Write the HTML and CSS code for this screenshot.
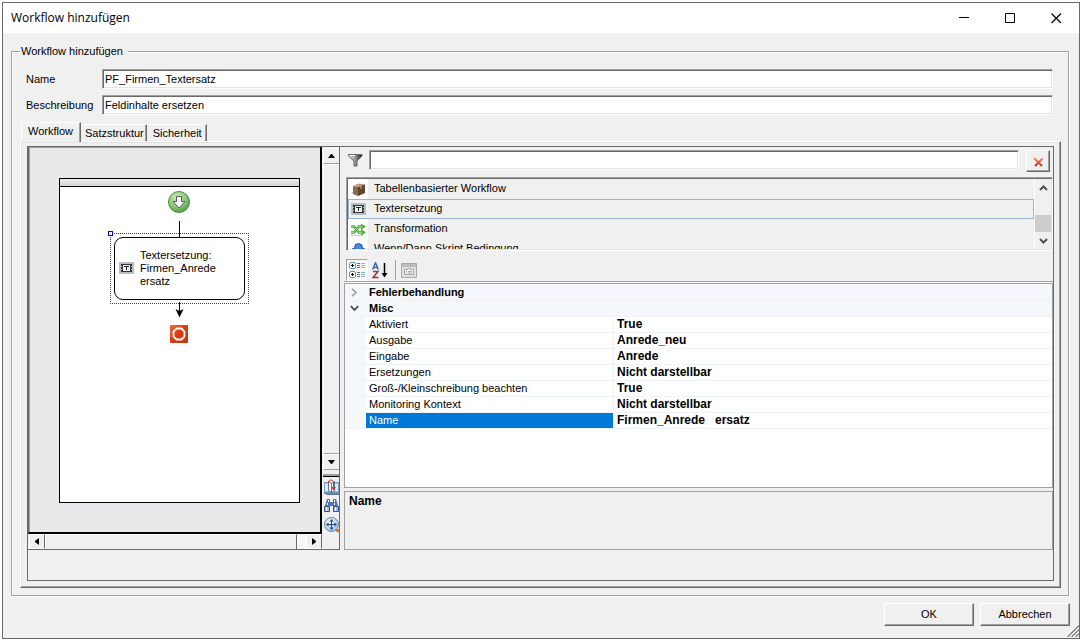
FILE: index.html
```html
<!DOCTYPE html>
<html lang="de">
<head>
<meta charset="utf-8">
<title>Workflow hinzufügen</title>
<link rel="stylesheet" href="styles.css">
</head>
<body>
<svg class="defs" aria-hidden="true">
  <defs>
    <radialGradient id="green" cx=".4" cy=".3" r=".75"><stop offset="0" stop-color="#c9edb5"/><stop offset=".55" stop-color="#8fcb79"/><stop offset="1" stop-color="#4a9440"/></radialGradient>
    <linearGradient id="red" x1="0" y1="0" x2="1" y2="1"><stop offset="0" stop-color="#ee6a45"/><stop offset=".5" stop-color="#dc3a0c"/><stop offset="1" stop-color="#b93a1c"/></linearGradient>
    <linearGradient id="steel" x1="0" y1="0" x2="1" y2="0"><stop offset="0" stop-color="#e8e8e8"/><stop offset=".45" stop-color="#a0a0a0"/><stop offset="1" stop-color="#222"/></linearGradient>
    <linearGradient id="cross" x1="0" y1="0" x2="0" y2="1"><stop offset="0" stop-color="#ff8a6a"/><stop offset="1" stop-color="#e02000"/></linearGradient>
    <radialGradient id="blue" cx=".4" cy=".3" r=".8"><stop offset="0" stop-color="#f4faff"/><stop offset="1" stop-color="#8fb8ea"/></radialGradient>
    <symbol id="textbox" viewBox="0 0 15 12">
      <rect width="15" height="12" fill="#b9bfc6"/><rect x="2" y="2" width="11" height="8" fill="#2e343b"/>
      <rect x="4" y="3" width="7" height="6" fill="#f3f3f3"/><path d="M5 4h5v1H8v3H7V5H5z" fill="#222"/>
      <path d="M2 4h1v1H2zM2 7h1v1H2zM12 4h1v1h-1zM12 7h1v1h-1z" fill="#b9bfc6"/>
    </symbol>
  </defs>
</svg>
<div class="window">
  <header class="titlebar">
    <h1 class="title">Workflow hinzufügen</h1>
    <button class="caption" aria-label="Minimieren"><svg width="11" height="11"><path d="M0 4.500h10" stroke="#000"/></svg></button>
    <button class="caption" aria-label="Maximieren"><svg width="11" height="11"><path d="M.5.500h9v9h-9z" fill="none" stroke="#000"/></svg></button>
    <button class="caption" aria-label="Schließen"><svg width="11" height="11"><path d="M.5.500l9.500 9.500M10 .500L.5 10" stroke="#000" stroke-width="1.200"/></svg></button>
  </header>

  <main class="client">
    <fieldset class="group">
      <legend class="legend">Workflow hinzufügen</legend>
      <div class="fields">
        <label for="name">Name</label><input class="text" id="name" type="text" value="PF_Firmen_Textersatz">
        <label for="desc">Beschreibung</label><input class="text" id="desc" type="text" value="Feldinhalte ersetzen">
      </div>

      <div class="tabs" role="tablist">
        <button class="tab active" role="tab" aria-selected="true">Workflow</button>
        <button class="tab" role="tab" aria-selected="false">Satzstruktur</button>
        <button class="tab" role="tab" aria-selected="false">Sicherheit</button>
      </div>

      <section class="page" role="tabpanel">
        <div class="split">
          <div class="designer">
            <div class="view">
              <div class="sheet">
                <div class="sheet-head"></div>
                <svg class="start" width="23" height="22"><circle cx="11" cy="11" r="10.500" fill="url(#green)" stroke="#4c8f45"/><path d="M8.500 5.500h5v5h3.500L11 17 5 10.500h3.500z" fill="#fff" stroke="#5c5470"/></svg>
                <svg width="9" height="17"><path d="M4.500 1v16" stroke="#000"/></svg>
                <div class="node">
                  <span class="handle"></span>
                  <svg width="15" height="12"><use href="#textbox"/></svg>
                  <span>Textersetzung:<br>Firmen_Anrede<br>ersatz</span>
                </div>
                <svg width="9" height="18"><path d="M4.500 2v11" stroke="#000"/><path d="M.5 9l4 2 4-2-4 8.500z"/></svg>
                <svg class="stop" width="19" height="18"><rect width="18" height="18" rx="1" fill="url(#red)"/><path d="M6.500 3.500h5l3 3v5l-3 3h-5l-3-3v-5z" fill="none" stroke="#fff" stroke-width="1.800"/></svg>
              </div>
            </div>
            <div class="side">
              <div class="vscroll">
                <button class="arrow" aria-label="Nach oben"><svg width="7" height="4"><path d="M3 0h1l3 4H0z"/></svg></button>
                <div class="thumb"></div>
                <button class="arrow" aria-label="Nach unten"><svg width="7" height="4"><path d="M0 0h7L4 4H3z"/></svg></button>
              </div>
              <div class="tools">
                <button class="tool" aria-label="Seiten"><svg width="15" height="16"><path d="M0 3h5v11H0zM10 3h5v11h-5z" fill="#7d9fbd"/><path d="M3 14h12v2H2z" fill="#57789a"/><path d="M0 13h15v2H0z" fill="#6d8dac"/><path d="M1 4.500h3v8H1zM11 4.500h3v8h-3z" fill="#dce8f2"/><path d="M4.500 2.500l3 2v9l-3-2zM10.500 2.500l-3 2v9l3-2z" fill="#fff" stroke="#58748e"/><path d="M4.500 4c0-4 5-4 5 0v5" fill="none" stroke="#d33"/><path d="M7 8h5l-2.500 3.500z" fill="#d33"/></svg></button>
                <button class="tool" aria-label="Suchen"><svg width="15" height="15"><path d="M3 1h3v3h3V1h3l2 7v5H9V8H6v5H1V8z" fill="#5272b3"/><path d="M.5 8.500h5v5h-5zM9.500 8.500h5v5h-5z" fill="#9fbbe3" stroke="#34518f"/><path d="M2 9h1v4H2zM11 9h1v4h-1zM4 2h1v2H4zM10 2h1v2h-1zM3 5h1v2H3zM10 5h1v2h-1z" fill="#fff"/></svg></button>
                <button class="tool" aria-label="Zoom"><svg width="15" height="16"><circle cx="7.500" cy="7.500" r="7" fill="url(#blue)" stroke="#76848f"/><path d="M7.500 3v9M3 7.500h9" stroke="#234a8c"/><path d="M7.500 2l2 2.500h-4zM7.500 13l2-2.500h-4zM2 7.500l2.500-2v4zM13 7.500l-2.500-2v4z" fill="#234a8c"/><circle cx="13.500" cy="13.500" r="1.800" fill="#e07a28"/></svg></button>
              </div>
            </div>
            <div class="hscroll">
              <button class="arrow" aria-label="Nach links"><svg width="4" height="7"><path d="M4 0v7L0 4V3z"/></svg></button>
              <div class="thumb"></div>
              <div class="dither"></div>
              <button class="arrow" aria-label="Nach rechts"><svg width="4" height="7"><path d="M0 0v7l4-3V3z"/></svg></button>
            </div>
          </div>

          <div class="side-panel">
            <div class="filter">
              <svg width="15" height="13" aria-hidden="true"><path d="M.5.500h13.500v1.500L9 7v5H6V7L.5 2z" fill="url(#steel)" stroke="#666"/><path d="M2 1h5v1H2z" fill="#fff"/></svg>
              <input class="text" type="text" aria-label="Filter">
              <button class="clear" aria-label="Filter löschen"><svg width="11" height="10"><path d="M1 1l8 8M9.500 1.500L2 9" stroke="url(#cross)" stroke-width="2"/></svg></button>
            </div>

            <div class="list">
              <ul class="items">
                <li class="item"><span class="icon"><svg width="15" height="14"><path d="M0 11l5-2v4z" fill="#bbb"/><path d="M2 4l5 1v9l-5-2z" fill="#8d6b48"/><path d="M2 4l6-2.500 6 1-7 2.500z" fill="#b4936a"/><path d="M7 5l7-2.500v8.500l-7 3z" fill="#5f452e"/><path d="M5 3l5 1v3" fill="none" stroke="#c7ab84"/></svg></span>Tabellenbasierter Workflow</li>
                <li class="item selected"><span class="icon"><svg width="15" height="12"><use href="#textbox"/></svg></span>Textersetzung</li>
                <li class="item"><span class="icon"><svg width="15" height="13"><path d="M0 12.500h12" stroke="#ccc"/><path d="M0 3.500h3l5 6h3M0 9.500h3l5-6h3" fill="none" stroke="#4c9c3d" stroke-width="2.600"/><path d="M10 .5l5 3-5 3.500zM10 6l5 3.500-5 3z" fill="#54b23c"/><path d="M0 3.500h3l5 6h3M0 9.500h3l5-6h3" fill="none" stroke="#9be07e"/></svg></span>Transformation</li>
                <li class="item"><span class="icon"><svg width="15" height="15"><path d="M1.500 6.500h12v8h-12z" fill="#dbe8fa" stroke="#3766b4"/><circle cx="7.500" cy="5.500" r="4" fill="#4a86e0" stroke="#2757a8"/></svg></span>Wenn/Dann Skript Bedingung</li>
              </ul>
              <div class="thin-scroll">
                <button class="chev" aria-label="Liste nach oben"><svg width="9" height="6"><path d="M1 5l3.500-3.500L8 5" fill="none" stroke="#505050" stroke-width="2"/></svg></button>
                <div class="thin-thumb"></div>
                <button class="chev" aria-label="Liste nach unten"><svg width="9" height="6"><path d="M1 1l3.500 3.500L8 1" fill="none" stroke="#505050" stroke-width="2"/></svg></button>
              </div>
            </div>

            <div class="toolbar" role="toolbar">
              <button class="tbtn pressed" aria-label="Kategorisiert"><svg width="17" height="17"><rect x=".5" y=".5" width="6" height="6" rx="1.500" fill="#fff" stroke="#5b93c7"/><rect x=".5" y="9.500" width="6" height="6" rx="1.500" fill="#fff" stroke="#5b93c7"/><path d="M2 3.500h3M3.500 2v3M2 12.500h3M3.500 11v3" stroke="#000"/><path d="M8 1.500h3M8 3.500h3M8 5.500h3M8 10.500h3M8 12.500h3M8 14.500h3" stroke="#6c6c6c"/><path d="M12 1.500h4M12 3.500h4M12 5.500h4M12 10.500h4M12 12.500h4M12 14.500h4" stroke="#85b4df"/></svg></button>
              <button class="tbtn" aria-label="Alphabetisch"><svg width="16" height="17"><path d="M.7 7.500L3.500.8l2.800 6.700M1.500 5.500h4" fill="none" stroke="#2e69b8" stroke-width="1.500"/><path d="M1 9.500h5L1 15.500h5.500" fill="none" stroke="#9c3535" stroke-width="1.500"/><path d="M12.500 1v13" stroke="#000" stroke-width="1.500"/><path d="M9.500 11l3 4.500 3-4.500z"/></svg></button>
              <span class="sep"></span>
              <button class="tbtn" aria-label="Eigenschaftenseiten" disabled><svg width="16" height="15"><path d="M.5.500h15v14H.5z" fill="#e0e0e0" stroke="#a8a8a8"/><path d="M1 1h14v3H1z" fill="#bcbcbc"/><path d="M3.500 6.500h3v-1h3v1h3v5h-9z" fill="#f0f0f0" stroke="#a8a8a8"/><path d="M5 8.500h1M7 8.500h4M5 10h1M7 10h4" stroke="#aaa"/></svg></button>
            </div>

            <div class="grid-box">
              <table class="props">
                <colgroup><col class="c-gutter"><col class="c-name"><col></colgroup>
                <tbody>
                  <tr class="cat"><td><svg width="9" height="9"><path d="M2 .8l4 3.700-4 3.700" fill="none" stroke="#a0a0a0" stroke-width="1.700"/></svg></td><th colspan="2">Fehlerbehandlung</th></tr>
                  <tr class="cat"><td><svg width="9" height="7"><path d="M.8 1l3.700 4 3.700-4" fill="none" stroke="#444" stroke-width="1.800"/></svg></td><th colspan="2">Misc</th></tr>
                  <tr><td></td><th>Aktiviert</th><td>True</td></tr>
                  <tr><td></td><th>Ausgabe</th><td>Anrede_neu</td></tr>
                  <tr><td></td><th>Eingabe</th><td>Anrede</td></tr>
                  <tr><td></td><th>Ersetzungen</th><td>Nicht darstellbar</td></tr>
                  <tr><td></td><th>Groß-/Kleinschreibung beachten</th><td>True</td></tr>
                  <tr><td></td><th>Monitoring Kontext</th><td>Nicht darstellbar</td></tr>
                  <tr class="current"><td></td><th>Name</th><td>Firmen_Anrede &nbsp; ersatz</td></tr>
                </tbody>
              </table>
            </div>
            <div class="help">Name</div>
          </div>
        </div>
      </section>
    </fieldset>

    <footer class="actions">
      <button class="btn">OK</button>
      <button class="btn">Abbrechen</button>
      <svg class="grip" width="13" height="13" aria-hidden="true"><path d="M0 13L13 0M4 13l9-9M8 13l5-5" stroke="#fff" stroke-width="1.500"/><path d="M1.500 13L13 1.500M5.500 13L13 5.500M9.500 13L13 9.500" stroke="#808080" stroke-width="1.500"/></svg>
    </footer>
  </main>
</div>
</body>
</html>
```
FILE: styles.css
```css
* { box-sizing: border-box; }

body {
  margin: 0;
  height: 100vh;
  padding: 2px 3px 4px 2px;
  background: #fff;
  color: #000;
  font: 11px/13px "Liberation Sans", Arial, sans-serif;
}

button {
  padding: 0;
  border: 0;
  background: #f0f0f0;
  color: #000;
  font: inherit;
}

svg { display: block; flex: none; }
.defs { position: absolute; width: 0; height: 0; }

.window {
  display: flex;
  flex-direction: column;
  height: 100%;
  border: 1px solid #696969;
  background: #f0f0f0;
}

/* Title bar */
.titlebar {
  display: flex;
  align-items: center;
  height: 30px;
  background: #fff;
}
.title {
  flex: 1;
  margin: 0;
  padding-left: 8px;
  font: 12px/16px "Open Sans", "Noto Sans", sans-serif;
}
.caption {
  display: grid;
  place-items: center;
  width: 46px;
  height: 28px;
  background: none;
}

.client {
  flex: 1;
  display: flex;
  flex-direction: column;
  min-height: 0;
  padding: 11px 10px 0 8px;
}

/* Group box */
.group {
  flex: 1;
  display: flex;
  flex-direction: column;
  min-width: 0;
  min-height: 0;
  margin: 0;
  padding: 11px 7px 7px 8px;
  border: 1px solid #a0a0a0;
  box-shadow: 1px 1px 0 #fff, inset 1px 1px 0 #fff;
}
.legend {
  height: 14px;
  padding: 0 5px 0 1px;
  background: #f0f0f0;
  line-height: 15px;
}

.fields {
  display: grid;
  grid-template-columns: 76px 1fr;
  row-gap: 6px;
  align-items: center;
  padding: 0 8px 0 6px;
}
.text {
  width: 100%;
  min-width: 0;
  height: 20px;
  padding: 0 2px;
  border: 1px solid;
  border-color: #a0a0a0 #fff #fff #a0a0a0;
  box-shadow: inset 1px 1px 0 #696969, inset -1px -1px 0 #e3e3e3;
  background: #fff;
  color: #000;
  font: inherit;
  outline: 0;
}

/* Tabs */
.tabs {
  display: flex;
  align-items: flex-end;
  height: 26px;
  padding-left: 1px;
}
.tab {
  height: 17px;
  padding: 0 2px 0 4px;
  border-top: 1px solid #fff;
  border-right: 1px solid #696969;
  box-shadow: inset -1px 0 0 #a0a0a0;
}
.tab + .tab + .tab { padding: 0 4px 0 6px; }
.tab.active {
  position: relative;
  z-index: 1;
  height: 20px;
  margin-bottom: -1px;
  padding: 0 7px 2px 6px;
  border-left: 1px solid #fff;
}

.page {
  flex: 1;
  display: flex;
  min-height: 0;
  padding: 4px 6px 6px;
  border: 1px solid;
  border-color: #fff #696969 #696969 #fff;
  box-shadow: inset -1px -1px 0 #a0a0a0, inset 1px 1px 0 #e3e3e3;
}
.split {
  flex: 1;
  display: grid;
  grid-template-columns: 312px minmax(0, 1fr);
  min-height: 0;
  padding-bottom: 30px;
  border: 1px solid #696969;
}

/* Workflow designer */
.designer {
  display: grid;
  grid-template-columns: minmax(0, 1fr) 17px;
  grid-template-rows: minmax(0, 1fr) 15px;
  border: solid #696969;
  border-width: 0 1px 1px 0;
}
.view {
  display: flex;
  padding: 31px 20px 29px 30px;
  border: solid;
  border-width: 0 2px 2px 1px;
  border-color: #000 #000 #000 #696969;
  box-shadow: inset 1px 1px 0 #a0a0a0;
  background: #e9e9eb;
}
.sheet {
  flex: 1;
  display: flex;
  flex-direction: column;
  align-items: center;
  border: 1px solid #000;
  background: #fff;
}
.sheet-head {
  align-self: stretch;
  height: 8px;
  border-bottom: 1px solid #000;
  background: linear-gradient(#ededed, #d2d2d2);
}
.start { margin: 4px 0 7px; }
.stop { margin-top: 7px; }
.node {
  position: relative;
  display: flex;
  align-items: center;
  gap: 6px;
  width: 131px;
  height: 63px;
  padding: 0 4px 1px;
  border: 1px solid #000;
  border-radius: 9px;
}
.node::before {
  content: "";
  position: absolute;
  inset: -5px;
  border: 1px dotted #444;
}
.handle {
  position: absolute;
  top: -7px;
  left: -7px;
  z-index: 1;
  width: 5px;
  height: 5px;
  border: 1px solid #00f;
  background: #fff;
}

/* Scroll bars of the designer */
.side {
  grid-row: span 2;
  display: flex;
  flex-direction: column;
  padding-left: 1px;
}
.vscroll {
  flex: 1;
  display: flex;
  flex-direction: column;
  padding-top: 1px;
}
.arrow {
  display: grid;
  place-items: center;
  width: 16px;
  height: 16px;
  border: 1px solid;
  border-color: #fff #a0a0a0 #a0a0a0 #fff;
}
.vscroll .arrow { border-right: 0; }
.thumb {
  flex: 1;
  border: 1px solid;
  border-color: #fff #696969 #696969 #fff;
}
.vscroll .thumb {
  border-right: 0;
  border-bottom-color: #a0a0a0;
}
.tools {
  display: flex;
  flex-direction: column;
  gap: 4px;
  height: 73px;
  margin-top: 6px;
  padding-top: 2px;
  border-top: 1px solid #000;
  box-shadow: 0 -2px 0 #a0a0a0;
}
.tool { height: 15px; }
.tool svg { margin-left: auto; }
.hscroll { display: flex; padding-left: 1px; }
.hscroll .arrow { height: 15px; border-color: #fff #696969 #fff #fff; }
.hscroll .thumb { border-bottom: 0; }
.dither {
  width: 9px;
  background: repeating-conic-gradient(#fff 0 25%, #f0f0f0 0 50%) 0 0 / 2px 2px;
}

/* Right side */
.side-panel {
  display: flex;
  flex-direction: column;
  min-width: 0;
  padding-left: 4px;
}
.filter {
  display: flex;
  align-items: flex-start;
  gap: 6px;
  padding: 3px 3px 5px 4px;
}
.filter svg { margin-top: 4px; }
.filter .text { flex: 1; }
.clear {
  display: grid;
  place-items: center end;
  width: 24px;
  height: 22px;
  margin-left: 1px;
  padding: 2px 5px 0 0;
  border: 1px solid;
  border-color: #fff #696969 #696969 #fff;
  box-shadow: inset -1px -1px 0 #a0a0a0;
}
.clear svg { margin: 0; }

.list {
  display: flex;
  height: 74px;
  margin-left: 2px;
  padding: 1px;
  border: 1px solid;
  border-color: #a0a0a0 #fff #fff #a0a0a0;
  box-shadow: inset 1px 1px 0 #696969, inset -1px -1px 0 #e3e3e3;
}
.items {
  flex: 1;
  height: 70px;
  margin: 0;
  padding: 0;
  overflow: hidden;
  list-style: none;
}
.item {
  display: flex;
  gap: 6px;
  height: 20px;
  line-height: 18px;
}
.icon {
  display: grid;
  place-items: center;
  width: 20px;
  height: 20px;
  background: #fff;
}
.item.selected { box-shadow: inset 0 0 0 1px #99b4d1; }
.item.selected .icon { background: none; }
.thin-scroll {
  display: flex;
  flex-direction: column;
  width: 17px;
  border-left: 1px solid #fff;
}
.chev { display: grid; place-items: center; height: 17px; }
.thin-thumb { height: 17px; margin-top: auto; background: #cdcdcd; }

.toolbar {
  display: flex;
  align-items: center;
  gap: 4px;
  height: 32px;
  padding: 7px 2px 0;
  border-bottom: 1px solid #fff;
  box-shadow: inset 0 -1px 0 #a0a0a0;
}
.tbtn {
  display: grid;
  place-items: center;
  height: 22px;
  background: none;
}
.tbtn.pressed {
  width: 22px;
  border: 1px solid;
  border-color: #a0a0a0 #fff #fff #a0a0a0;
  background: #f8f8f8;
}
.sep { width: 1px; height: 20px; margin: 0 1px 0 3px; background: #a0a0a0; }

.grid-box {
  flex: 1;
  min-height: 0;
  padding-top: 1px;
  border: 1px solid #a0a0a0;
  background: #fff;
}
.props {
  width: 100%;
  border-spacing: 0;
  table-layout: fixed;
}
.c-gutter { width: 21px; }
.c-name { width: 248px; }
.props th, .props td {
  height: 16px;
  padding: 0 3px;
  border-bottom: 1px solid #eff4fb;
  line-height: 15px;
  text-align: left;
  white-space: nowrap;
}
.props th { font-weight: normal; border-right: 1px solid #f0f4fa; }
.props td { font-weight: bold; font-size: 12px; }
.props td:first-child { padding: 0 5px; background: #f4f7fc; }
.props .cat th { background: #f4f7fc; font-weight: bold; border-bottom-color: #f0f0f0; }
.props .current th { background: #0078d7; color: #fff; }

.help {
  height: 59px;
  margin-top: 3px;
  padding: 3px 4px;
  border: 1px solid #a0a0a0;
  font-size: 12px;
  font-weight: bold;
}

/* Footer */
.actions {
  position: relative;
  display: flex;
  justify-content: flex-end;
  gap: 6px;
  height: 42px;
  padding-top: 7px;
  margin-right: -1px;
}
.btn {
  width: 90px;
  height: 23px;
  border: 1px solid;
  border-color: #fff #696969 #696969 #fff;
  box-shadow: inset -1px -1px 0 #a0a0a0;
}
.grip {
  position: absolute;
  right: -9px;
  bottom: 1px;
}
```
